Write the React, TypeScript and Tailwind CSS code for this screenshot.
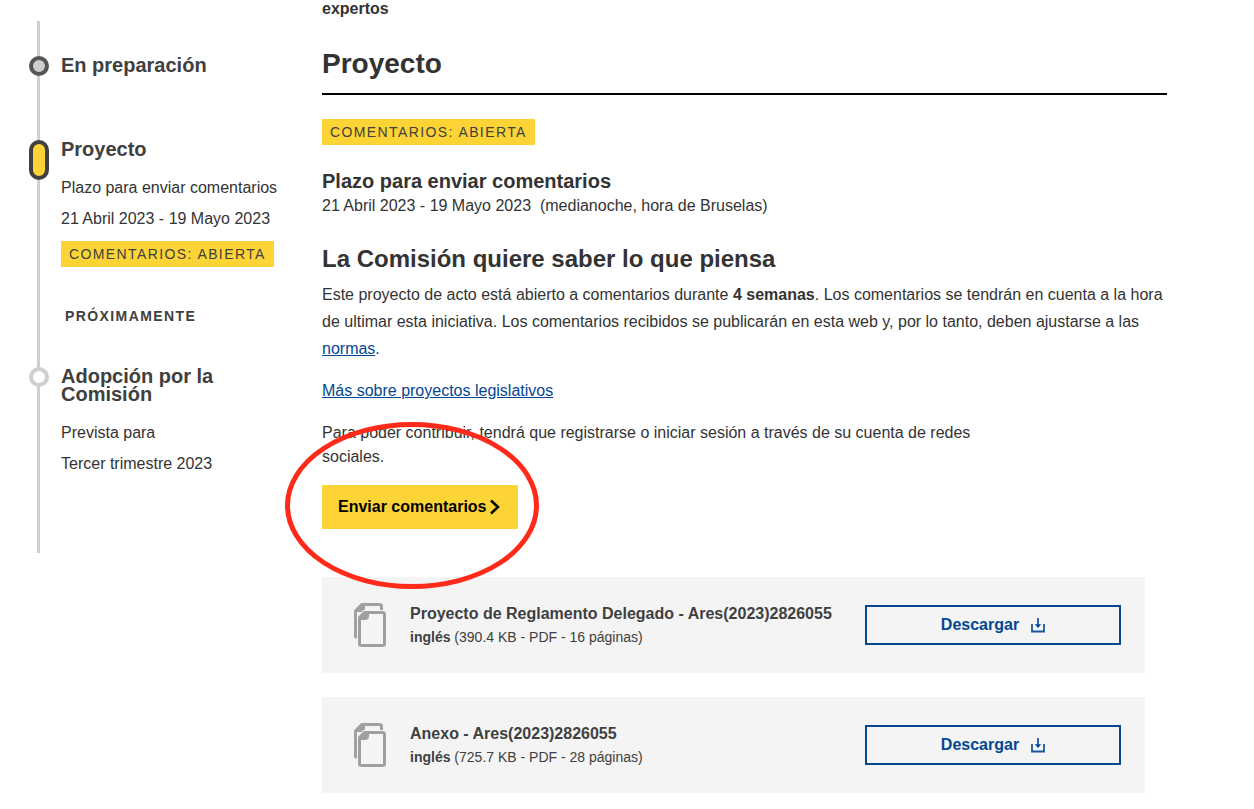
type Attachment = {
  title: string;
  language: string;
  details: string;
};

const attachments: Attachment[] = [
  {
    title: "Proyecto de Reglamento Delegado - Ares(2023)2826055",
    language: "inglés",
    details: "(390.4 KB - PDF - 16 páginas)",
  },
  {
    title: "Anexo - Ares(2023)2826055",
    language: "inglés",
    details: "(725.7 KB - PDF - 28 páginas)",
  },
];

function StatusBadge() {
  return (
    <span className="inline-block bg-[#fdd436] px-2 text-sm leading-[26px] tracking-widest whitespace-nowrap uppercase text-[#404040]">
      Comentarios: abierta
    </span>
  );
}

function FilesIcon() {
  return (
    <svg width="32" height="44" viewBox="0 0 32 44" className="shrink-0" aria-hidden="true">
      {/* back page */}
      <path
        d="M3 35L1.500 33.500V8L8 1.500h17.500a2 2 0 0 1 2 2V7"
        fill="none"
        stroke="#a0a0a0"
        strokeWidth="3"
      />
      <path d="M0 9.500V7.500L7.500 0H11v5q0 4-4 4H3z" fill="#a0a0a0" />
      {/* front page */}
      <path
        d="M5.500 14.500l5-5H28.500a2 2 0 0 1 2 2V40.500a2 2 0 0 1-2 2H7.500a2 2 0 0 1-2-2z"
        fill="#f4f4f4"
        stroke="#f4f4f4"
        strokeWidth="5"
      />
      <path
        d="M5.500 14.500l5-5H28.500a2 2 0 0 1 2 2V40.500a2 2 0 0 1-2 2H7.500a2 2 0 0 1-2-2z"
        fill="#f4f4f4"
        stroke="#a0a0a0"
        strokeWidth="3"
      />
      <path d="M5 17v-2.500L10.500 9H15v4q0 4-4 4z" fill="#a0a0a0" />
    </svg>
  );
}

function DownloadIcon() {
  return (
    <svg width="14" height="16" viewBox="0 0 14 16" fill="none" aria-hidden="true">
      <path d="M1 7v7.500h12V7" stroke="#1d569f" strokeWidth="1.800" />
      <path d="M7 1v9" stroke="#1d569f" strokeWidth="1.800" />
      <path d="M3.800 7.200h6.400L7 11z" fill="#034694" />
    </svg>
  );
}

function Timeline() {
  return (
    <aside className="w-[322px] shrink-0 pt-[21px] pl-[37px]">
      <ol className="border-l-3 border-[#cfcfcf] pt-[35px] pb-[74px]">
        <li className="-ml-[11px] flex gap-3">
          <span className="size-5 shrink-0 rounded-full border-4 border-[#555] bg-[#cfcfcf]" />
          <h3 className="text-xl leading-[18px] font-bold text-[#404040]">En preparación</h3>
        </li>
        <li className="mt-16 -ml-[11px] flex gap-3">
          <span className="h-10 w-5 shrink-0 rounded-full border-4 border-[#404040] bg-[#fdd436]" />
          <div>
            <h3 className="mb-[14px] text-xl leading-[18px] font-bold text-[#404040]">Proyecto</h3>
            <p className="leading-[31px]">Plazo para enviar comentarios</p>
            <p className="mb-[7px] leading-[31px]">21 Abril 2023 - 19 Mayo 2023</p>
            <StatusBadge />
          </div>
        </li>
        <li className="mt-[37px] pl-[25px] text-sm leading-6 font-bold tracking-widest uppercase text-[#404040]">
          Próximamente
        </li>
        <li className="mt-[39px] -ml-[11px] flex gap-3">
          <span className="size-5 shrink-0 rounded-full border-4 border-[#cfcfcf] bg-white" />
          <div className="w-[216px]">
            <h3 className="mb-[14px] text-xl leading-[18px] font-bold text-[#404040]">
              Adopción por la Comisión
            </h3>
            <p className="leading-[31px]">Prevista para</p>
            <p className="leading-[31px]">Tercer trimestre 2023</p>
          </div>
        </li>
      </ol>
    </aside>
  );
}

function AttachmentCard({ file }: { file: Attachment }) {
  return (
    <li className="flex h-24 items-center bg-[#f4f4f4] pr-6 pl-8">
      <FilesIcon />
      <div className="ml-6 min-w-0 flex-1 text-[#404040]">
        <p className="leading-6 font-bold">{file.title}</p>
        <p className="text-sm leading-[22px]">
          <strong>{file.language}</strong> {file.details}
        </p>
      </div>
      <button
        type="button"
        className="flex h-10 w-64 shrink-0 items-center justify-center gap-3 border-2 border-[#034694] font-bold text-[#034694]"
      >
        Descargar
        <DownloadIcon />
      </button>
    </li>
  );
}

export default function App() {
  return (
    <div className="flex min-h-screen bg-white font-['Liberation_Sans',Arial,sans-serif] text-base text-[#333]">
      <Timeline />

      <main className="min-w-0 flex-1 pr-[87px] pb-4">
        <p className="leading-[18px] font-bold">expertos</p>

        <h1 className="mt-[30px] border-b-2 border-black pb-[13px] text-[28px] leading-8 font-bold">
          Proyecto
        </h1>

        <div className="mt-6 flex">
          <StatusBadge />
        </div>

        <h2 className="mt-6 text-xl leading-6 font-bold">Plazo para enviar comentarios</h2>
        <p className="leading-[26px]">
          21 Abril 2023 - 19 Mayo 2023 &nbsp;(medianoche, hora de Bruselas)
        </p>

        <h2 className="mt-6 text-2xl leading-8 font-bold">
          La Comisión quiere saber lo que piensa
        </h2>
        <p className="mt-[6px] leading-[27px]">
          Este proyecto de acto está abierto a comentarios durante <strong>4 semanas</strong>. Los
          comentarios se tendrán en cuenta a la hora de ultimar esta iniciativa. Los comentarios
          recibidos se publicarán en esta web y, por lo tanto, deben ajustarse a las{" "}
          <a href="#normas" className="text-[#034694] underline">
            normas
          </a>
          .
        </p>
        <p className="mt-[17px] leading-6">
          <a href="#proyectos" className="text-[#034694] underline">
            Más sobre proyectos legislativos
          </a>
        </p>
        <p className="mt-[18px] max-w-[665px] leading-6">
          Para poder contribuir, tendrá que registrarse o iniciar sesión a través de su cuenta de
          redes sociales.
        </p>

        <div className="relative mt-4 flex">
          <button
            type="button"
            className="flex h-11 items-center gap-[3px] bg-[#fdd436] pr-[18px] pl-4 font-bold text-black"
          >
            Enviar comentarios
            <svg width="10" height="16" viewBox="0 0 10 16" fill="none" aria-hidden="true">
              <path d="M1 1.500L8 8l-7 6.500" stroke="#000" strokeWidth="2.500" />
            </svg>
          </button>
          {/* hand-drawn highlight around the call to action */}
          <svg
            width="256"
            height="170"
            viewBox="0 0 256 170"
            fill="none"
            className="pointer-events-none absolute -top-16 -left-[38px]"
            aria-hidden="true"
          >
            <ellipse cx="128" cy="84.500" rx="124.500" ry="81" stroke="#ff2a1a" strokeWidth="5" />
          </svg>
        </div>

        <ul className="mt-12 mr-[22px] space-y-6">
          {attachments.map((file) => (
            <AttachmentCard key={file.title} file={file} />
          ))}
        </ul>
      </main>
    </div>
  );
}
